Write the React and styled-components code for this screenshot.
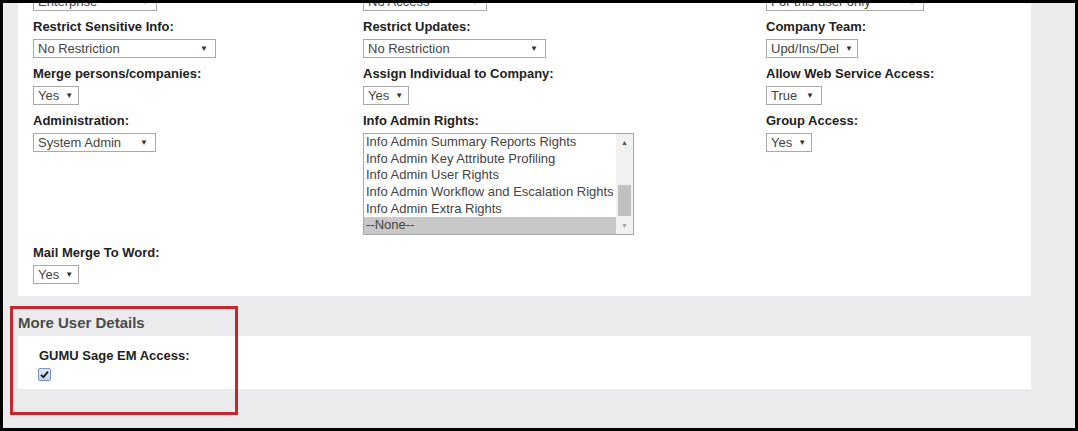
import React from "react";
import styled, { createGlobalStyle } from "styled-components";

const GlobalStyle = createGlobalStyle`
  html, body {
    margin: 0;
    padding: 0;
    background: #000;
  }
  body {
    font-family: "Liberation Sans", Arial, sans-serif;
  }
`;

const rightsOptions = [
  "Info Admin Summary Reports Rights",
  "Info Admin Key Attribute Profiling",
  "Info Admin User Rights",
  "Info Admin Workflow and Escalation Rights",
  "Info Admin Extra Rights",
  "--None--",
];

const App = () => {
  return (
    <>
      <GlobalStyle />
      <Frame>
        <Scroller>
          <Panel>
            <FieldGrid>
              <Field>
                <Label>License Type:</Label>
                <Select width={124}>
                  <span>Enterprise</span>
                  <Arrow>▼</Arrow>
                </Select>
              </Field>
              <Field>
                <Label>Restrict Access:</Label>
                <Select width={124}>
                  <span>No Access</span>
                  <Arrow>▼</Arrow>
                </Select>
              </Field>
              <Field>
                <Label>Private Activities:</Label>
                <Select width={158}>
                  <span>For this user only</span>
                  <Arrow>▼</Arrow>
                </Select>
              </Field>

              <Field>
                <Label>Restrict Sensitive Info:</Label>
                <Select width={183}>
                  <span>No Restriction</span>
                  <Arrow>▼</Arrow>
                </Select>
              </Field>
              <Field>
                <Label>Restrict Updates:</Label>
                <Select width={183}>
                  <span>No Restriction</span>
                  <Arrow>▼</Arrow>
                </Select>
              </Field>
              <Field>
                <Label>Company Team:</Label>
                <Select width={92}>
                  <span>Upd/Ins/Del</span>
                  <Arrow>▼</Arrow>
                </Select>
              </Field>

              <Field>
                <Label>Merge persons/companies:</Label>
                <Select width={46}>
                  <span>Yes</span>
                  <Arrow>▼</Arrow>
                </Select>
              </Field>
              <Field>
                <Label>Assign Individual to Company:</Label>
                <Select width={46}>
                  <span>Yes</span>
                  <Arrow>▼</Arrow>
                </Select>
              </Field>
              <Field>
                <Label>Allow Web Service Access:</Label>
                <Select width={56}>
                  <span>True</span>
                  <Arrow>▼</Arrow>
                </Select>
              </Field>

              <Field>
                <Label>Administration:</Label>
                <Select width={123}>
                  <span>System Admin</span>
                  <Arrow>▼</Arrow>
                </Select>
              </Field>
              <Field>
                <Label>Info Admin Rights:</Label>
                <ListBox>
                  <Options>
                    {rightsOptions.map((opt) => (
                      <Option key={opt} selected={opt === "--None--"}>
                        {opt}
                      </Option>
                    ))}
                  </Options>
                  <ScrollTrack>
                    <ScrollArrow dim={false}>▲</ScrollArrow>
                    <ScrollSpace>
                      <Thumb />
                    </ScrollSpace>
                    <ScrollArrow dim>▼</ScrollArrow>
                  </ScrollTrack>
                </ListBox>
              </Field>
              <Field>
                <Label>Group Access:</Label>
                <Select width={46}>
                  <span>Yes</span>
                  <Arrow>▼</Arrow>
                </Select>
              </Field>

              <Field>
                <Label>Mail Merge To Word:</Label>
                <Select width={46}>
                  <span>Yes</span>
                  <Arrow>▼</Arrow>
                </Select>
              </Field>
            </FieldGrid>
          </Panel>

          <SectionTitle>More User Details</SectionTitle>
          <DetailPanel>
            <Label>GUMU Sage EM Access:</Label>
            <CheckBox>
              <svg width="9" height="9" viewBox="0 0 9 9">
                <path
                  d="M1 4.8 L3.4 7.2 L8 1.6"
                  fill="none"
                  stroke="#1f1f1f"
                  strokeWidth="1.9"
                />
              </svg>
            </CheckBox>
          </DetailPanel>
        </Scroller>
        <Highlight />
      </Frame>
    </>
  );
};

const Frame = styled.div`
  position: relative;
  box-sizing: border-box;
  width: 1078px;
  height: 431px;
  border: 3px solid #000;
  background: #ebebed;
  overflow: hidden;
`;

const Scroller = styled.div`
  margin-top: -41px;
  padding: 0 44px 0 15px;
`;

const Panel = styled.div`
  background: #fff;
  padding: 10px 0 4px 15px;
`;

const FieldGrid = styled.div`
  display: grid;
  grid-template-columns: 330px 403px 1fr;
`;

const Field = styled.div`
  display: flex;
  flex-direction: column;
  align-items: flex-start;
  margin-bottom: 8px;
`;

const Label = styled.div`
  font-size: 13px;
  font-weight: bold;
  line-height: 16px;
  color: #222;
  margin-bottom: 4px;
`;

const Select = styled.div`
  box-sizing: border-box;
  width: ${(p) => p.width}px;
  height: 19px;
  display: flex;
  align-items: center;
  justify-content: space-between;
  padding: 0 7px 0 4px;
  border: 1px solid #a9a9a9;
  background: #fff;
  font-size: 13px;
  color: #444;
  white-space: nowrap;
`;

const Arrow = styled.span`
  font-size: 8px;
  color: #333;
  margin-left: 6px;
`;

const ListBox = styled.div`
  box-sizing: border-box;
  width: 271px;
  height: 102px;
  display: flex;
  border: 1px solid #a9a9a9;
  background: #fff;
  margin-bottom: 2px;
`;

const Options = styled.div`
  flex: 1;
  display: flex;
  flex-direction: column;
`;

const Option = styled.div`
  height: 16.67px;
  line-height: 16.67px;
  padding-left: 2px;
  font-size: 13px;
  color: #444;
  white-space: nowrap;
  background: ${(p) => (p.selected ? "#c8c8c8" : "transparent")};
`;

const ScrollTrack = styled.div`
  width: 17px;
  display: flex;
  flex-direction: column;
  background: #f1f1f1;
`;

const ScrollArrow = styled.div`
  height: 17px;
  display: flex;
  align-items: center;
  justify-content: center;
  font-size: 7px;
  color: ${(p) => (p.dim ? "#a3a3a3" : "#505050")};
`;

const ScrollSpace = styled.div`
  flex: 1;
  display: flex;
  flex-direction: column;
  justify-content: flex-end;
  padding: 0 2px 1px;
`;

const Thumb = styled.div`
  height: 31px;
  background: #c1c1c1;
`;

const SectionTitle = styled.div`
  margin: 18px 0 4px;
  font-size: 15px;
  font-weight: bold;
  line-height: 18px;
  color: #4b4b4b;
`;

const DetailPanel = styled.div`
  background: #fff;
  padding: 12px 0 8px 21px;
  display: flex;
  flex-direction: column;
  align-items: flex-start;
`;

const CheckBox = styled.div`
  box-sizing: border-box;
  width: 13px;
  height: 13px;
  margin-left: -1px;
  display: flex;
  align-items: center;
  justify-content: center;
  border: 1px solid #7e93b8;
  border-radius: 2px;
  background: linear-gradient(#dce8f7, #c3d5ee);
`;

const Highlight = styled.div`
  position: absolute;
  left: 7px;
  top: 303px;
  width: 228px;
  height: 109px;
  box-sizing: border-box;
  border: 3px solid #c8262f;
  pointer-events: none;
`;

export default App;
